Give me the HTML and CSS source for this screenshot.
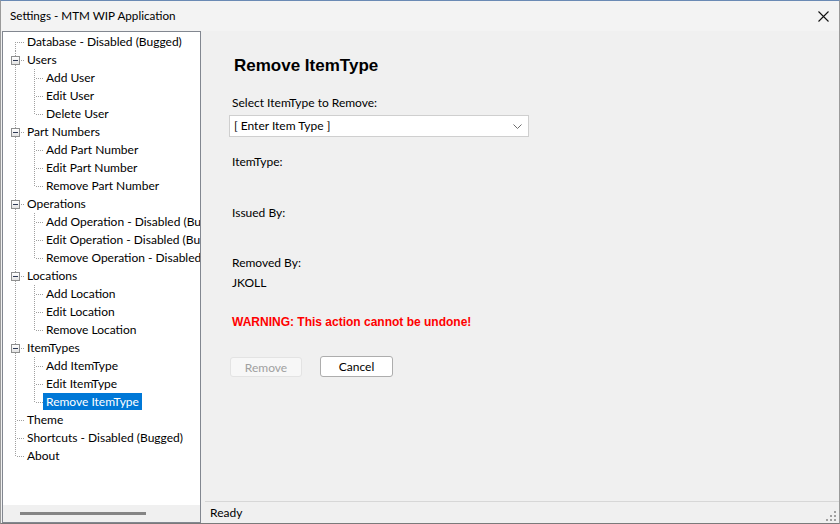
FILE: index.html
```html
<!DOCTYPE html>
<html>
<head>
<meta charset="utf-8">
<title>Settings - MTM WIP Application</title>
<link rel="stylesheet" href="styles.css">
</head>
<body>
<div class="window">
  <div class="titlebar">
    <span class="title">Settings - MTM WIP Application</span>
    <svg class="close" width="11" height="11" viewBox="0 0 11 11"><path d="M0.5 0.5 L10.5 10.5 M10.5 0.5 L0.5 10.5" stroke="#111" stroke-width="1.1" fill="none"/></svg>
  </div>
  <div class="body">
    <div class="tree">
      <div class="nodes">
        <div class="row"><span class="c0 first"></span><span class="lbl">Database - Disabled (Bugged)</span></div>
        <div class="row"><span class="c0 mid"><i class="exp"></i></span><span class="lbl">Users</span></div>
        <div class="row"><span class="c0 pass"></span><span class="c1 mid"></span><span class="lbl">Add User</span></div>
        <div class="row"><span class="c0 pass"></span><span class="c1 mid"></span><span class="lbl">Edit User</span></div>
        <div class="row"><span class="c0 pass"></span><span class="c1 last"></span><span class="lbl">Delete User</span></div>
        <div class="row"><span class="c0 mid"><i class="exp"></i></span><span class="lbl">Part Numbers</span></div>
        <div class="row"><span class="c0 pass"></span><span class="c1 mid"></span><span class="lbl">Add Part Number</span></div>
        <div class="row"><span class="c0 pass"></span><span class="c1 mid"></span><span class="lbl">Edit Part Number</span></div>
        <div class="row"><span class="c0 pass"></span><span class="c1 last"></span><span class="lbl">Remove Part Number</span></div>
        <div class="row"><span class="c0 mid"><i class="exp"></i></span><span class="lbl">Operations</span></div>
        <div class="row"><span class="c0 pass"></span><span class="c1 mid"></span><span class="lbl">Add Operation - Disabled (Bugged)</span></div>
        <div class="row"><span class="c0 pass"></span><span class="c1 mid"></span><span class="lbl">Edit Operation - Disabled (Bugged)</span></div>
        <div class="row"><span class="c0 pass"></span><span class="c1 last"></span><span class="lbl">Remove Operation - Disabled (Bugged)</span></div>
        <div class="row"><span class="c0 mid"><i class="exp"></i></span><span class="lbl">Locations</span></div>
        <div class="row"><span class="c0 pass"></span><span class="c1 mid"></span><span class="lbl">Add Location</span></div>
        <div class="row"><span class="c0 pass"></span><span class="c1 mid"></span><span class="lbl">Edit Location</span></div>
        <div class="row"><span class="c0 pass"></span><span class="c1 last"></span><span class="lbl">Remove Location</span></div>
        <div class="row"><span class="c0 mid"><i class="exp"></i></span><span class="lbl">ItemTypes</span></div>
        <div class="row"><span class="c0 pass"></span><span class="c1 mid"></span><span class="lbl">Add ItemType</span></div>
        <div class="row"><span class="c0 pass"></span><span class="c1 mid"></span><span class="lbl">Edit ItemType</span></div>
        <div class="row"><span class="c0 pass"></span><span class="c1 last"></span><span class="lbl sel">Remove ItemType</span></div>
        <div class="row"><span class="c0 mid"></span><span class="lbl">Theme</span></div>
        <div class="row"><span class="c0 mid"></span><span class="lbl">Shortcuts - Disabled (Bugged)</span></div>
        <div class="row"><span class="c0 last"></span><span class="lbl">About</span></div>
      </div>
      <div class="hscroll"><span class="thumb"></span></div>
    </div>
    <div class="main">
      <div class="content">
        <div class="heading">Remove ItemType</div>
        <div class="label sel-label">Select ItemType to Remove:</div>
        <div class="combo"><span class="combo-text">[ Enter Item Type ]</span>
          <svg class="chev" width="9" height="5" viewBox="0 0 9 5"><path d="M0.5 0.5 L4.5 4.5 L8.5 0.5" stroke="#6d6d6d" stroke-width="1" fill="none"/></svg>
        </div>
        <div class="label itemtype">ItemType:</div>
        <div class="label issued">Issued By:</div>
        <div class="label removed">Removed By:</div>
        <div class="label user">JKOLL</div>
        <div class="warning">WARNING: This action cannot be undone!</div>
        <div class="buttons">
          <span class="btn disabled">Remove</span>
          <span class="btn cancel">Cancel</span>
        </div>
      </div>
      <div class="status">
        <span class="status-text">Ready</span>
        <svg class="grip" width="12" height="12" viewBox="0 0 12 12">
          <rect x="9" y="1" width="2" height="2" fill="#a0a0a0"/>
          <rect x="5" y="5" width="2" height="2" fill="#a0a0a0"/>
          <rect x="9" y="5" width="2" height="2" fill="#a0a0a0"/>
          <rect x="1" y="9" width="2" height="2" fill="#a0a0a0"/>
          <rect x="5" y="9" width="2" height="2" fill="#a0a0a0"/>
          <rect x="9" y="9" width="2" height="2" fill="#a0a0a0"/>
        </svg>
      </div>
    </div>
  </div>
</div>
</body>
</html>
```
FILE: styles.css
```css
* { box-sizing: border-box; }
html, body { margin: 0; padding: 0; }
body {
  width: 840px;
  height: 524px;
  overflow: hidden;
  background: #f0f0f0;
  font-family: "Lato", "Noto Sans", sans-serif;
  font-size: 12px;
  color: #000;
}
.window {
  width: 840px;
  height: 524px;
  display: flex;
  flex-direction: column;
  border-top: 1px solid #6a8ab4;
  border-left: 1px solid #9a9a9a;
  border-right: 1px solid #9a9a9a;
  border-bottom: 1px solid #7a7a7a;
  background: #f0f0f0;
}
.titlebar {
  height: 30px;
  flex: none;
  display: flex;
  align-items: center;
  justify-content: space-between;
  padding: 0 10px 0 9px;
  background: #f3f3f3;
}
.title { font-size: 11.7px; line-height: 15px; margin-top: -2px; }
.body {
  flex: 1;
  display: flex;
  min-height: 0;
}
.tree {
  width: 199px;
  flex: none;
  margin-left: 1px;
  background: #fff;
  border: 1px solid #828790;
  display: flex;
  flex-direction: column;
  overflow: hidden;
}
.nodes {
  flex: 1;
  padding-top: 1px;
  overflow: hidden;
}
.row {
  height: 18px;
  display: flex;
  align-items: flex-start;
  white-space: nowrap;
}
.c0, .c1 {
  position: relative;
  flex: none;
  height: 18px;
}
.c0 { width: 21px; }
.c1 { width: 19px; }
.c0::before, .c1::before {
  content: "";
  position: absolute;
  width: 1px;
  background: repeating-linear-gradient(to bottom, #a0a0a0 0 1px, transparent 1px 2px);
}
.c0::before { left: 12px; }
.c1::before { left: 10px; }
.first::before { top: 9px; bottom: 0; }
.mid::before, .pass::before { top: 0; bottom: 0; }
.last::before { top: 0; height: 10px; }
.first::after, .mid::after, .last::after {
  content: "";
  position: absolute;
  top: 9px;
  height: 1px;
  background: repeating-linear-gradient(to right, #a0a0a0 0 1px, transparent 1px 2px);
}
.c0.first::after, .c0.mid::after, .c0.last::after { left: 14px; right: 0; }
.c1.mid::after, .c1.last::after { left: 12px; right: 0; }
.exp {
  position: absolute;
  left: 8px;
  top: 5px;
  width: 9px;
  height: 9px;
  border: 1px solid #8e8f8f;
  background: linear-gradient(to bottom, #ffffff, #e3e3e3);
  z-index: 1;
}
.exp::after {
  content: "";
  position: absolute;
  left: 1px;
  top: 3px;
  width: 5px;
  height: 1px;
  background: #2f3a55;
}
.lbl {
  padding: 0 3px;
  line-height: 17px;
  height: 17px;
}
.lbl.sel {
  background: #0078d7;
  color: #fff;
}
.hscroll {
  height: 17px;
  flex: none;
  background: #f0f0f0;
  display: flex;
  align-items: center;
  padding-left: 17px;
}
.thumb {
  display: block;
  width: 126px;
  height: 3px;
  background: #858585;
}
.main {
  flex: 1;
  display: flex;
  flex-direction: column;
  min-width: 0;
}
.content {
  flex: 1;
  padding: 24px 0 0 28px;
  display: flex;
  flex-direction: column;
  align-items: flex-start;
}
.heading {
  font-family: "Liberation Sans", sans-serif;
  font-weight: bold;
  font-size: 17px;
  line-height: 20px;
  margin-left: 5px;
  margin-top: 1px;
}
.label {
  line-height: 16px;
  margin-left: 3px;
}
.sel-label { margin-top: 19px; }
.combo {
  margin-top: 4px;
  width: 300px;
  height: 22px;
  background: #fff;
  border: 1px solid #cfcfcf;
  display: flex;
  align-items: center;
  justify-content: space-between;
  padding: 0 6px 0 4px;
}
.combo-text { line-height: 16px; }
.itemtype { margin-top: 17px; }
.issued { margin-top: 35px; }
.removed { margin-top: 34px; }
.user { margin-top: 4px; }
.warning {
  margin-top: 23px;
  margin-left: 3px;
  font-family: "Liberation Sans", sans-serif;
  font-weight: bold;
  font-size: 12px;
  line-height: 16px;
  color: #ff0000;
}
.buttons {
  margin-top: 26px;
  display: flex;
  align-items: flex-start;
  margin-left: 1px;
}
.btn {
  display: flex;
  align-items: center;
  justify-content: center;
  border-radius: 3px;
}
.btn.disabled {
  margin-top: 1px;
  width: 72px;
  height: 20px;
  color: #a0a0a0;
  background: #f7f7f7;
  border: 1px solid #e3e3e3;
}
.btn.cancel {
  margin-left: 18px;
  width: 73px;
  height: 21px;
  background: #fff;
  border: 1px solid #adadad;
}
.status {
  height: 22px;
  flex: none;
  margin-left: 4px;
  border-top: 1px solid #d7d7d7;
  display: flex;
  align-items: center;
  justify-content: space-between;
  padding: 0 2px 0 5px;
}
.status-text { line-height: 16px; margin-top: 1px; }
.grip { align-self: flex-end; margin-bottom: 1px; }
```
